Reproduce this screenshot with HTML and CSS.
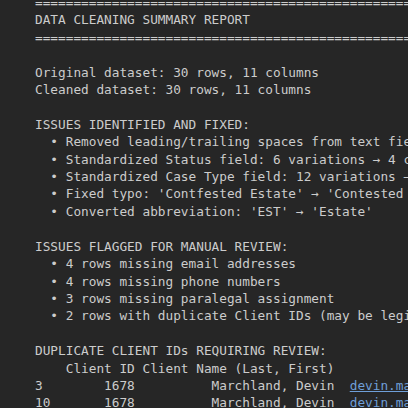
FILE: index.html
```html
<!DOCTYPE html>
<html lang="en">
<head>
<meta charset="utf-8">
<title>Data Cleaning Summary Report</title>
<link rel="stylesheet" href="styles.css">
</head>
<body>
<main class="viewport">
<pre class="output">============================================================
DATA CLEANING SUMMARY REPORT
============================================================

Original dataset: 30 rows, 11 columns
Cleaned dataset: 30 rows, 11 columns

ISSUES IDENTIFIED AND FIXED:
  • Removed leading/trailing spaces from text fields
  • Standardized Status field: 6 variations → 4 canonical values
  • Standardized Case Type field: 12 variations → 6 categories
  • Fixed typo: 'Contfested Estate' → 'Contested Estate'
  • Converted abbreviation: 'EST' → 'Estate'

ISSUES FLAGGED FOR MANUAL REVIEW:
  • 4 rows missing email addresses
  • 4 rows missing phone numbers
  • 3 rows missing paralegal assignment
  • 2 rows with duplicate Client IDs (may be legitimate)

DUPLICATE CLIENT IDs REQUIRING REVIEW:
    Client ID Client Name (Last, First)                      Email
3        1678          Marchland, Devin  <a class="link" href="#">devin.marchland@email.com</a>
10       1678          Marchland, Devin  <a class="link" href="#">devin.marchland@email.com</a>
</pre>
</main>
</body>
</html>
```

FILE: styles.css
```css
html, body {
  margin: 0;
  padding: 0;
  background: #262626;
  overflow: hidden;
}

.viewport {
  width: 408px;
  height: 408px;
  overflow: hidden;
}

.output {
  margin: -6px 0 0 35px;
  font-family: "DejaVu Sans Mono", "Liberation Mono", monospace;
  font-size: 12.75px;
  line-height: 17.4px;
  color: #cccccc;
  white-space: pre;
}

.link {
  color: #6f9fd8;
  text-decoration: underline;
}
```
